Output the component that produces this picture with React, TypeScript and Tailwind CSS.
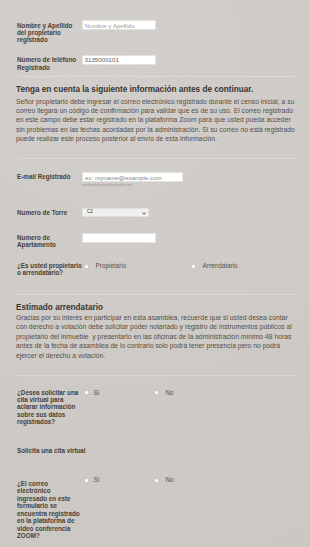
import React from 'react'

const labelCls = 'w-[66px] shrink-0 pl-[1px] text-[6.3px] leading-[7.4px] font-bold whitespace-nowrap text-[#473f36]'
const textCls = 'text-[6.4px] leading-[7px] text-[#5a5248]'
const paraCls = 'text-[6.8px] whitespace-nowrap text-[#574f46]'

function Radio({ label, width, gap = 'ml-[7px]' }: { label: string; width?: string; gap?: string }) {
  return (
    <div className={`flex items-center ${width ?? ''}`}>
      <span className="ml-[1.5px] h-[5px] w-[5px] rounded-full border border-[#d6d3cf] bg-white shadow-[0_0_1px_rgba(0,0,0,0.15)]" />
      <span className={`${gap} ${textCls} -mt-[1px]`}>{label}</span>
    </div>
  )
}

function Separator({ className }: { className: string }) {
  return <div className={`ml-[1px] h-px bg-[#dcd9d5] ${className}`} />
}

function Lines({ lines }: { lines: string[] }) {
  return (
    <>
      {lines.map((l, i) => (
        <span key={i} className="block">
          {l}
        </span>
      ))}
    </>
  )
}

export default function App() {
  return (
    <div className="min-h-[547px] w-[310px] overflow-hidden bg-[#cdcac6] bg-[radial-gradient(circle_at_30%_10%,#d1cecb,#cbc8c4)] pl-[16px] pr-[15px] pt-[20px] font-['Liberation_Sans',Arial,sans-serif]">
      {/* nombre */}
      <div className="flex items-start">
        <div className={`${labelCls} pt-[1.5px]`}>
          <Lines lines={['Nombre y Apellido', 'del propietario', 'registrado']} />
        </div>
        <input
          placeholder="Nombre y Apellido"
          className="h-[10px] w-[74px] border border-[#e4e2df] bg-white px-[1.5px] text-[6.2px] text-[#555] placeholder:text-[#9c9c9c] outline-none"
        />
      </div>

      {/* telefono */}
      <div className="mt-[11px] flex items-start">
        <div className={`${labelCls} pt-[1.5px]`}>
          <Lines lines={['Número de teléfono', 'Registrado']} />
        </div>
        <input
          defaultValue="3135000101"
          className="h-[10px] w-[74px] border border-[#e4e2df] bg-white px-[1.5px] text-[6.2px] text-[#5c5c5c] outline-none"
        />
      </div>

      <Separator className="mt-[5px]" />

      <h2 className="mt-[8px] text-[8.2px] leading-[10px] font-bold text-[#3a352f]">
        Tenga en cuenta la siguiente información antes de continuar.
      </h2>
      <p className={`mt-[2px] leading-[9.2px] ${paraCls}`}>
        <Lines
          lines={[
            'Señor propietario debe ingresar el correo electrónico registrado durante el censo inicial, a su',
            'correo llegará un código de confirmación para validar que es de su uso. El correo registrado',
            'en este campo debe estar registrado en la plataforma Zoom para que usted pueda acceder',
            'sin problemas en las fechas acordadas por la administración. Si su correo no está registrado',
            'puede realizar este proceso posterior al envío de esta información.',
          ]}
        />
      </p>

      <Separator className="mt-[15px]" />

      {/* email */}
      <div className="mt-[13px] flex items-start">
        <div className={`${labelCls} pt-[1px]`}>E-mail Registrado</div>
        <div className="flex flex-col">
          <input
            placeholder="ex: myname@example.com"
            className="h-[10px] w-[101px] border border-[#e4e2df] bg-white px-[2px] text-[6.2px] text-[#555] placeholder:text-[#858585] outline-none"
          />
          <span className="mt-[1px] text-[3.5px] leading-[5px] text-[#9a958f]">nombredelcorreo@ejemplo.com</span>
        </div>
      </div>

      {/* torre */}
      <div className="mt-[20px] flex items-start">
        <div className={`${labelCls} pt-[1px]`}>Numero de Torre</div>
        <div className="relative flex h-[9px] w-[67px] items-center border border-[#e2e0dd] bg-[#f1f0ee] pl-[4px] text-[4.5px] text-[#333]">
          C2
          <svg className="absolute right-[2px] top-[2.5px]" width="4" height="3" viewBox="0 0 4 3">
            <path d="M0.4 0.5 L2 2.3 L3.6 0.5" fill="none" stroke="#444" strokeWidth="0.9" />
          </svg>
        </div>
      </div>

      {/* apartamento */}
      <div className="mt-[16px] flex items-start">
        <div className={`${labelCls} pt-[1px]`}>
          <Lines lines={['Numero de', 'Apartamento']} />
        </div>
        <input className="h-[10px] w-[74px] border border-[#e4e2df] bg-white outline-none" />
      </div>

      {/* propietario / arrendatario */}
      <div className="mt-[13px] flex items-start">
        <div className={labelCls}>
          <Lines lines={['¿Es usted propietario', 'o arrendatario?']} />
        </div>
        <div className="mt-[1.5px] flex">
          <Radio label="Propietario" width="w-[107px]" />
          <Radio label="Arrendatario" />
        </div>
      </div>

      <Separator className="mt-[17px]" />

      <h2 className="mt-[8px] text-[8.2px] leading-[10px] font-bold text-[#3a352f]">Estimado arrendatario</h2>
      <p className={`leading-[9.6px] ${paraCls}`}>
        <Lines
          lines={[
            'Gracias por su interés en participar en esta asamblea, recuerde que si usted desea contar',
            'con derecho a votación debe solicitar poder notariado y registro de instrumentos públicos al',
            'propietario del inmueble\u00a0 y presentarlo en las oficinas de la administración mínimo 48 horas',
            'antes de la fecha de asamblea de lo contrario solo podrá tener presencia pero no podrá',
            'ejercer el derecho a votación.',
          ]}
        />
      </p>

      <Separator className="mt-[14px]" />

      {/* cita virtual */}
      <div className="mt-[13px] flex items-start">
        <div className={labelCls}>
          <Lines lines={['¿Desea solicitar una', 'cita virtual para', 'aclarar información', 'sobre sus datos', 'registrados?']} />
        </div>
        <div className="mt-[1px] flex">
          <Radio label="Si" width="w-[70px]" gap="ml-[5px]" />
          <Radio label="No" gap="ml-[7px]" />
        </div>
      </div>

      <div className="mt-[21px] pl-[1px] text-[6.3px] leading-[7.4px] font-bold text-[#473f36]">Solicita una cita virtual</div>

      {/* zoom */}
      <div className="mt-[23px] flex items-start pb-[6px]">
        <div className={`${labelCls} pt-[3px]`}>
          <Lines
            lines={[
              '¿El correo',
              'electrónico',
              'ingresado en este',
              'formulario se',
              'encuentra registrado',
              'en la plataforma de',
              'video conferencia',
              'ZOOM?',
            ]}
          />
        </div>
        <div className="flex">
          <Radio label="Si" width="w-[70px]" gap="ml-[5px]" />
          <Radio label="No" gap="ml-[7px]" />
        </div>
      </div>
    </div>
  )
}
